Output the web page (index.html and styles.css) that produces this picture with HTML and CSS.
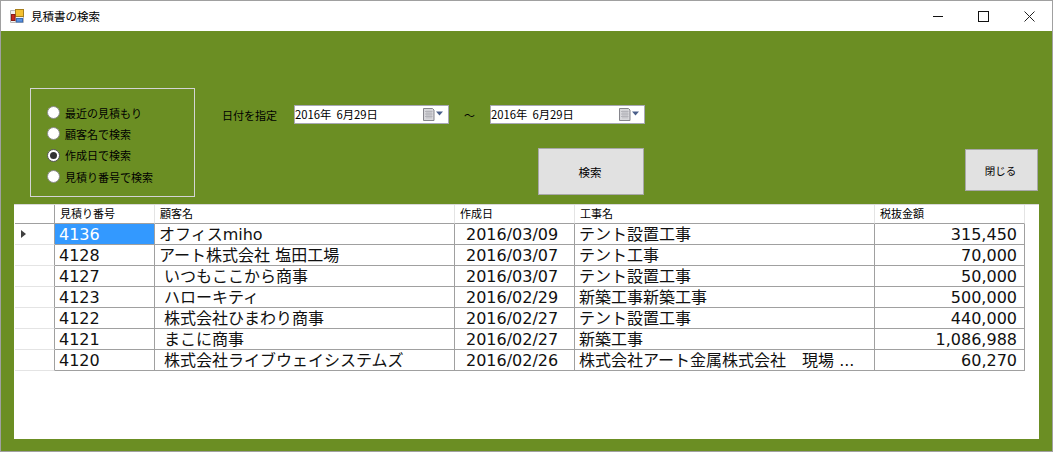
FILE: index.html
```html
<!DOCTYPE html>
<html lang="ja">
<head>
<meta charset="utf-8">
<title>見積書の検索</title>
<link rel="stylesheet" href="styles.css">
</head>
<body>
<div class="window">
  <header class="titlebar">
    <svg class="app-icon" width="14" height="14" viewBox="0 0 14 14">
      <path d="M0.500 1.500h13v12h-13zM0.500 5.500h13M0.500 9.500h13M5.500 1.500v12" fill="#f2f2f2" stroke="#b8b8b8"/>
      <rect x="5.500" y="0.500" width="8" height="7" fill="#f4c030" stroke="#a8801c"/>
      <rect x="1.500" y="5.500" width="3.500" height="6" fill="#c8281e" stroke="#8a1c16"/>
      <rect x="6.500" y="9.500" width="6" height="3.500" fill="#5b93e0" stroke="#3a6cb4"/>
    </svg>
    <span class="title-text">見積書の検索</span>
    <div class="caption-buttons">
      <svg width="10" height="10" viewBox="0 0 10 10"><path d="M0 5.500h10" stroke="#111" fill="none"/></svg>
      <svg width="11" height="11" viewBox="0 0 11 11"><rect x="0.500" y="0.500" width="10" height="10" stroke="#111" fill="none"/></svg>
      <svg width="11" height="11" viewBox="0 0 11 11"><path d="M0.500 0.500l10 10M10.500 0.500l-10 10" stroke="#222" fill="none"/></svg>
    </div>
  </header>
  <main class="client">
    <section class="top">
      <div class="group">
        <label class="radio-row"><span class="radio"></span>最近の見積もり</label>
        <label class="radio-row"><span class="radio"></span>顧客名で検索</label>
        <label class="radio-row"><span class="radio checked"></span>作成日で検索</label>
        <label class="radio-row"><span class="radio"></span>見積り番号で検索</label>
      </div>
      <div class="controls">
        <div class="date-row">
          <span class="date-label">日付を指定</span>
          <div class="picker">
            <span class="picker-text">2016年  6月29日</span>
            <svg class="cal" width="20" height="13" viewBox="0 0 20 13">
              <path d="M0.500 0.500h9l1.500 1.500v10.500h-10.500z" fill="#d8d8dc" stroke="#85858c"/>
              <path d="M2 3.500h7.500M2 6h7.500M2 8.500h7.500M4 2.500v8M6 2.500v8M8 2.500v8" stroke="#b4b4ba" fill="none"/>
              <path d="M13 3.500h7l-3.500 4z" fill="#4a5f8a"/>
            </svg>
          </div>
          <span class="tilde">～</span>
          <div class="picker">
            <span class="picker-text">2016年  6月29日</span>
            <svg class="cal" width="20" height="13" viewBox="0 0 20 13">
              <path d="M0.500 0.500h9l1.500 1.500v10.500h-10.500z" fill="#d8d8dc" stroke="#85858c"/>
              <path d="M2 3.500h7.500M2 6h7.500M2 8.500h7.500M4 2.500v8M6 2.500v8M8 2.500v8" stroke="#b4b4ba" fill="none"/>
              <path d="M13 3.500h7l-3.500 4z" fill="#4a5f8a"/>
            </svg>
          </div>
        </div>
        <div class="button-row">
          <button class="btn btn-search">検索</button>
          <button class="btn btn-close">閉じる</button>
        </div>
      </div>
    </section>
    <section class="grid-panel">
      <table class="grid">
        <colgroup>
          <col class="c0"><col class="c1"><col class="c2"><col class="c3"><col class="c4"><col class="c5">
        </colgroup>
        <thead>
          <tr><th class="corner"></th><th>見積り番号</th><th>顧客名</th><th>作成日</th><th>工事名</th><th>税抜金額</th></tr>
        </thead>
        <tbody>
          <tr><td class="rowhead"><span class="arrow"></span></td><td class="selected">4136</td><td>オフィスmiho</td><td class="date">2016/03/09</td><td>テント設置工事</td><td class="num">315,450</td></tr>
          <tr><td class="rowhead"></td><td>4128</td><td>アート株式会社 塩田工場</td><td class="date">2016/03/07</td><td>テント工事</td><td class="num">70,000</td></tr>
          <tr><td class="rowhead"></td><td>4127</td><td class="ind">いつもここから商事</td><td class="date">2016/03/07</td><td>テント設置工事</td><td class="num">50,000</td></tr>
          <tr><td class="rowhead"></td><td>4123</td><td class="ind">ハローキティ</td><td class="date">2016/02/29</td><td>新築工事新築工事</td><td class="num">500,000</td></tr>
          <tr><td class="rowhead"></td><td>4122</td><td class="ind">株式会社ひまわり商事</td><td class="date">2016/02/27</td><td>テント設置工事</td><td class="num">440,000</td></tr>
          <tr><td class="rowhead"></td><td>4121</td><td class="ind">まこに商事</td><td class="date">2016/02/27</td><td>新築工事</td><td class="num">1,086,988</td></tr>
          <tr><td class="rowhead"></td><td>4120</td><td class="ind">株式会社ライブウェイシステムズ</td><td class="date">2016/02/26</td><td>株式会社アート金属株式会社　現場 ...</td><td class="num">60,270</td></tr>
        </tbody>
      </table>
    </section>
  </main>
</div>
</body>
</html>
```

FILE: styles.css
```css
* { box-sizing: border-box; }
html, body { margin: 0; padding: 0; }
body {
  width: 1053px;
  height: 452px;
  overflow: hidden;
  font-family: "Noto Sans CJK JP", "Noto Sans", sans-serif;
  color: #000;
}
.window {
  width: 1053px;
  height: 452px;
  border: 1px solid #a0a0a0;
  display: flex;
  flex-direction: column;
}
.titlebar {
  height: 30px;
  flex: none;
  background: #fff;
  display: flex;
  align-items: center;
  padding-left: 9px;
}
.app-icon { margin-right: 7px; }
.title-text { font-size: 11.500px; line-height: 30px; }
.caption-buttons {
  margin-left: auto;
  margin-right: 17px;
  display: flex;
  align-items: center;
  gap: 35px;
}
.client {
  flex: 1;
  background: #6b8e23;
  padding-top: 57px;
}
.top {
  display: flex;
  height: 116px;
  padding-left: 29px;
}
.group {
  width: 165px;
  height: 109px;
  border: 1px solid #d4d4d4;
  padding: 13px 0 0 16px;
  display: flex;
  flex-direction: column;
}
.radio-row {
  display: flex;
  align-items: center;
  height: 21.330px;
  font-size: 11px;
}
.radio {
  width: 13px;
  height: 13px;
  border-radius: 50%;
  background: #fff;
  border: 1px solid #8a8a8a;
  margin-right: 5px;
  flex: none;
  position: relative;
}
.radio.checked { border-color: #555; }
.radio.checked::after {
  content: "";
  position: absolute;
  left: 2px;
  top: 2px;
  width: 7px;
  height: 7px;
  border-radius: 50%;
  background: #333;
}
.controls {
  margin-left: 27px;
  display: flex;
  flex-direction: column;
}
.date-row {
  margin-top: 17px;
  height: 19px;
  display: flex;
  align-items: center;
}
.date-label { width: 72px; font-size: 11px; }
.picker {
  width: 155px;
  height: 19px;
  background: #fff;
  border: 1px solid #a8a8b4;
  display: flex;
  align-items: center;
}
.picker-text { font-size: 11.300px; white-space: pre; padding-bottom: 2px; }
.cal { margin-left: auto; margin-right: 5px; }
.tilde { width: 41px; text-align: center; font-size: 11px; }
.button-row {
  margin-top: 24px;
  display: flex;
  align-items: flex-start;
}
.btn {
  background: #e1e1e1;
  border: 1px solid #a8a8a8;
  font: inherit;
  font-size: 11.500px;
  padding: 0;
  color: #000;
}
.btn-search { margin-left: 316px; width: 106px; height: 47px; padding-right: 2px; }
.btn-close { margin-left: 321px; margin-top: 1px; width: 73px; height: 42px; font-size: 10.500px; padding-right: 2px; }
.grid-panel {
  margin-left: 13px;
  width: 1025px;
  height: 235px;
  background: #fff;
  border-top: 1px solid #d8d8d8;
  padding-left: 1px;
}
.grid {
  border-collapse: separate;
  border-spacing: 0;
  table-layout: fixed;
  width: 1010px;
}
.c0 { width: 40px; }
.c1 { width: 100px; }
.c2 { width: 300px; }
.c3 { width: 120px; }
.c4 { width: 300px; }
.c5 { width: 150px; }
.grid th {
  height: 19px;
  padding: 0 0 2px 5px;
  font-size: 11px;
  line-height: 16px;
  font-weight: normal;
  text-align: left;
  background: #fff;
  border-right: 1px solid #e4e4e4;
  border-bottom: 1px solid #a0a0a0;
  overflow: hidden;
  white-space: nowrap;
}
.grid th.corner { border-right-color: #a0a0a0; }
.grid td {
  height: 21px;
  padding: 2px 0 0 4px;
  font-family: "DejaVu Sans", "Noto Sans CJK JP", sans-serif;
  font-size: 16px;
  line-height: 18px;
  border-right: 1px solid #a0a0a0;
  border-bottom: 1px solid #a0a0a0;
  color: #111;
  white-space: nowrap;
  overflow: hidden;
}
.grid td.rowhead {
  padding: 0;
  border-bottom-color: #e4e4e4;
}
.arrow {
  display: block;
  width: 0;
  height: 0;
  margin-left: 6px;
  border-left: 5px solid #404040;
  border-top: 4px solid transparent;
  border-bottom: 4px solid transparent;
}
.grid td.selected { background: #3399ff; color: #fff; }
.grid td.ind { padding-left: 9px; }
.grid td.date { padding-left: 11px; }
.grid td.num { text-align: right; padding-right: 7px; }
```
